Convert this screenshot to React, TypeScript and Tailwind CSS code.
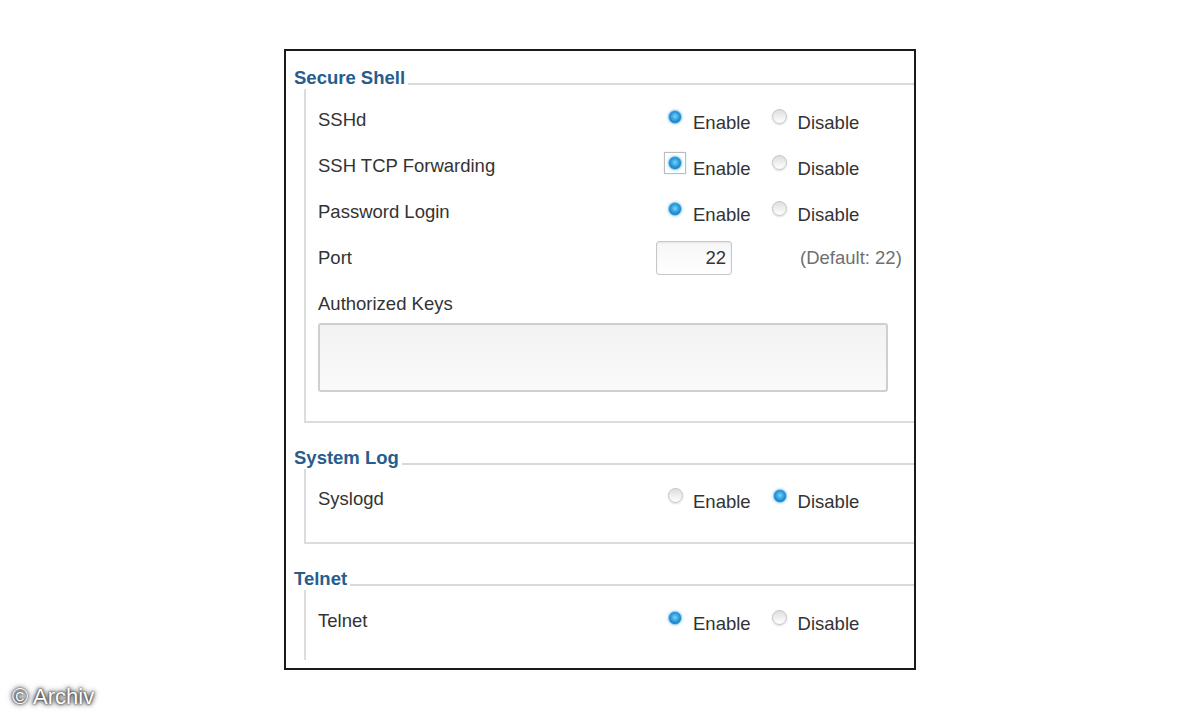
import React from 'react';

const font = { fontFamily: '"Liberation Sans", Arial, sans-serif' };

function Radio({ on }: { on: boolean }) {
  if (on) {
    return (
      <span className="block w-[14px] h-[14px] shrink-0 rounded-full border border-[#8cc5e8] bg-[radial-gradient(circle_at_50%_45%,#7fd0f5_0%,#2a9ee0_45%,#1677bd_75%,#9fd2ef_100%)] shadow-[0_0_3px_#8fcbec]" />
    );
  }
  return (
    <span className="block w-[15px] h-[15px] shrink-0 rounded-full border border-[#c4c4c4] bg-[linear-gradient(#dedede,#ffffff)] shadow-[0_1px_2px_#dcdcdc]" />
  );
}

function Option({ label, on, focus }: { label: string; on: boolean; focus?: boolean }) {
  return (
    <div className="flex items-center gap-[11px]">
      <span className={`flex items-center justify-center w-[14px] h-[14px] shrink-0 ${on ? 'mb-[6px]' : 'mb-[8px]'}`}>
        {focus ? (
          <span className="flex items-center justify-center w-[22px] h-[22px] shrink-0 border border-[#bdbdbd] shadow-[0_0_2px_#d4e8f5]">
            <Radio on={on} />
          </span>
        ) : (
          <Radio on={on} />
        )}
      </span>
      <span className="pt-[6px] leading-[22px]">{label}</span>
    </div>
  );
}

function Toggle({ label, enabled, focus }: { label: string; enabled: boolean; focus?: boolean }) {
  return (
    <div className="flex items-center h-[46px]">
      <div className="w-[350px] leading-[22px]">{label}</div>
      <Option label="Enable" on={enabled} focus={focus} />
      <div className="ml-[22px]">
        <Option label="Disable" on={!enabled} />
      </div>
    </div>
  );
}

function Legend({ title }: { title: string }) {
  return (
    <div className="flex items-end h-[22px]">
      <span className="pl-[8px] pr-[3px] text-[18.5px] font-bold text-[#265d8c] leading-[22px]">{title}</span>
      <div className="flex-1 mb-[4px] h-[2px] bg-[#d9d9d9]" />
    </div>
  );
}

export default function App() {
  return (
    <div className="relative w-[1200px] h-[720px] bg-white text-[18.5px] text-[#333]" style={font}>
      <div className="pt-[49px] pl-[284px]">
        <div className="w-[632px] h-[621px] border-2 border-[#1a1a1a] flex flex-col">
          <div className="mt-[16px]">
            <Legend title="Secure Shell" />
            <div className="ml-[18px] border-l-2 border-b-2 border-[#dcdcdc] pl-[12px] pt-[8px] pb-[29px]">
              <Toggle label="SSHd" enabled />
              <Toggle label="SSH TCP Forwarding" enabled focus />
              <Toggle label="Password Login" enabled />
              <div className="flex items-center h-[46px]">
                <div className="w-[338px] leading-[22px]">Port</div>
                <div className="w-[76px] h-[34px] rounded-[3px] border border-[#c8c8c8] bg-[linear-gradient(#f6f6f6,#ffffff)] shadow-[inset_0_1px_2px_#e4e4e4] flex items-center justify-end pr-[5px]">
                  22
                </div>
                <div className="ml-[68px] text-[#6f6f6f]">(Default: 22)</div>
              </div>
              <div className="mt-[12px] leading-[22px]">Authorized Keys</div>
              <div className="mt-[8px] w-[570px] h-[69px] rounded-[3px] border-2 border-[#cfcfcf] bg-[linear-gradient(#f2f2f2,#fafafa)]" />
            </div>
          </div>
          <div className="mt-[24px]">
            <Legend title="System Log" />
            <div className="ml-[18px] border-l-2 border-b-2 border-[#dcdcdc] pl-[12px] pt-[7px] pb-[20px]">
              <Toggle label="Syslogd" enabled={false} />
            </div>
          </div>
          <div className="mt-[24px] flex-1 flex flex-col">
            <Legend title="Telnet" />
            <div className="ml-[18px] mb-[8px] flex-1 border-l-2 border-[#dcdcdc] pl-[12px] pt-[8px]">
              <Toggle label="Telnet" enabled />
            </div>
          </div>
        </div>
      </div>
      <div className="absolute left-[12px] top-[683px] text-[22px] leading-[28px] text-white [text-shadow:0_0_2px_#222,0_0_4px_#333,0_0_6px_#555]">
        © Archiv
      </div>
    </div>
  );
}
